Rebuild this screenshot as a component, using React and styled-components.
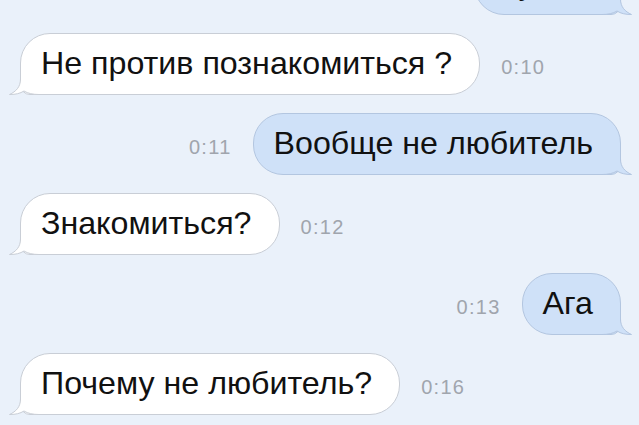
import React from "react";
import styled, { createGlobalStyle } from "styled-components";

const messages = [
  { id: 1, out: true, text: "Ну нет", time: "0:09" },
  { id: 2, out: false, text: "Не против познакомиться ?", time: "0:10" },
  { id: 3, out: true, text: "Вообще не любитель", time: "0:11" },
  { id: 4, out: false, text: "Знакомиться?", time: "0:12" },
  { id: 5, out: true, text: "Ага", time: "0:13" },
  { id: 6, out: false, text: "Почему не любитель?", time: "0:16" },
];

const Tail = ({ out }) => (
  <TailSvg out={out} width="30" height="26" viewBox="0 0 30 26">
    <g transform={out ? "translate(30 0) scale(-1 1)" : undefined}>
      <path
        d="M11.5 0 L11.5 10 C11.5 18 7 22.5 0.5 25.5 C7 25.5 11 24.5 15 22 C19 24.5 24 25.5 30 25.5 L30 0 Z"
        fill={out ? "#cfe1f8" : "#ffffff"}
      />
      <path
        d="M11.5 0 L11.5 10 C11.5 18 7 22.5 0.5 25.5 C7 25.5 11 24.5 15 22 C19 24.5 24 25.5 30 25.5"
        fill="none"
        stroke={out ? "#b3c6e0" : "#c9ced6"}
        strokeWidth="1"
      />
    </g>
  </TailSvg>
);

export default function App() {
  return (
    <>
      <GlobalStyle />
      <Chat>
        {messages.map((m) => (
          <Row key={m.id} out={m.out}>
            <Bubble out={m.out}>
              {m.text}
              <Tail out={m.out} />
            </Bubble>
            <Time>{m.time}</Time>
          </Row>
        ))}
      </Chat>
    </>
  );
}

const GlobalStyle = createGlobalStyle`
  html, body {
    margin: 0;
    padding: 0;
    background: #eaf1fa;
    overflow: hidden;
  }
  body {
    font-family: "Liberation Sans", Arial, sans-serif;
  }
`;

const Chat = styled.div`
  width: 639px;
  height: 425px;
  overflow: hidden;
  display: flex;
  flex-direction: column;
  gap: 18px;
  padding: 0 18px 0 20px;
  box-sizing: border-box;
  & > :first-child {
    margin-top: -47px;
  }
`;

const Row = styled.div`
  display: flex;
  flex-direction: ${({ out }) => (out ? "row-reverse" : "row")};
  align-items: center;
  gap: 21px;
  flex-shrink: 0;
`;

const Bubble = styled.div`
  position: relative;
  height: 62px;
  box-sizing: border-box;
  padding: 0 27px 2px 20px;
  display: flex;
  align-items: center;
  font-size: 32.2px;
  color: #111;
  white-space: nowrap;
  background: ${({ out }) => (out ? "#cfe1f8" : "#ffffff")};
  border: 1px solid ${({ out }) => (out ? "#b3c6e0" : "#c9ced6")};
  border-radius: ${({ out }) => (out ? "30px 30px 10px 30px" : "30px 30px 30px 10px")};
`;

const TailSvg = styled.svg`
  position: absolute;
  bottom: -1px;
  ${({ out }) => (out ? "right: -12px;" : "left: -12px;")}
  display: block;
`;

const Time = styled.span`
  font-size: 20px;
  letter-spacing: 1.3px;
  color: #a0a5ad;
  margin-top: 7px;
`;
